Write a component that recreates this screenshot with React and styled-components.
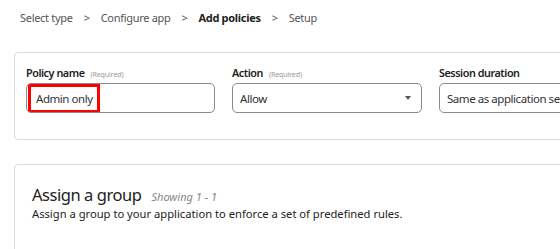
import React from "react";
import styled, { createGlobalStyle } from "styled-components";

const GlobalStyle = createGlobalStyle`
  html, body {
    margin: 0;
    padding: 0;
    background: #ffffff;
    overflow: hidden;
  }
  body {
    font-family: "Noto Sans", "Open Sans", sans-serif;
    color: #222;
  }
`;

const Page = styled.div`
  width: 560px;
  height: 249px;
  overflow: hidden;
  padding: 8px 0 0 14px;
  box-sizing: border-box;
`;

const Steps = styled.nav`
  display: flex;
  align-items: center;
  column-gap: 11px;
  padding-left: 6px;
  height: 18px;
  font-size: 11px;
  letter-spacing: -0.3px;
  color: #555;
`;

const Step = styled.span`
  font-weight: ${(p) => (p.active ? 700 : 400)};
  color: ${(p) => (p.active ? "#222" : "#555")};
`;

const Card = styled.section`
  width: 620px;
  box-sizing: border-box;
  border: 1px solid #dcdcdc;
  border-radius: 4px;
  background: #fff;
  margin-top: ${(p) => p.top}px;
  padding: ${(p) => p.pad};
  min-height: ${(p) => p.minH}px;
`;

const FieldRow = styled.div`
  display: flex;
  column-gap: 17px;
`;

const Field = styled.div`
  display: flex;
  flex-direction: column;
  width: ${(p) => p.w}px;
  flex-shrink: 0;
`;

const Label = styled.label`
  display: flex;
  align-items: baseline;
  column-gap: 6px;
  height: 18px;
  font-size: 10.8px;
  font-weight: 600;
  letter-spacing: -0.45px;
  color: #222;
`;

const Req = styled.span`
  font-size: 7px;
  font-weight: 400;
  letter-spacing: -0.1px;
  color: #999;
`;

const Box = styled.div`
  position: relative;
  display: flex;
  align-items: center;
  height: 30px;
  box-sizing: border-box;
  border: 1px solid #8a8a8a;
  border-radius: 5px;
  padding: 0 10px 0 ${(p) => p.padL || 8}px;
  font-size: 11.5px;
  letter-spacing: -0.45px;
  color: #333;
  white-space: nowrap;
  overflow: hidden;
`;

const Highlight = styled.span`
  position: absolute;
  left: 1px;
  top: 0;
  width: 72px;
  height: 29px;
  box-sizing: border-box;
  border: 3px solid #ff0000;
`;

const Caret = styled.span`
  margin-left: auto;
  width: 0;
  height: 0;
  border-left: 3.5px solid transparent;
  border-right: 3.5px solid transparent;
  border-top: 4px solid #555;
`;

const TitleLine = styled.div`
  display: flex;
  align-items: baseline;
  column-gap: 10px;
`;

const Title = styled.h2`
  margin: 0;
  font-size: 16.5px;
  font-weight: 400;
  letter-spacing: -0.45px;
  color: #222;
`;

const Count = styled.span`
  font-size: 11px;
  font-style: italic;
  color: #888;
`;

const Desc = styled.p`
  margin: 0;
  font-size: 11.2px;
  color: #222;
`;

const steps = ["Select type", "Configure app", "Add policies", "Setup"];

export default function App() {
  return (
    <>
      <GlobalStyle />
      <Page>
        <Steps>
          {steps.map((s, ix) => (
            <React.Fragment key={s}>
              {ix > 0 && <span>&gt;</span>}
              <Step active={s === "Add policies"}>{s}</Step>
            </React.Fragment>
          ))}
        </Steps>

        <Card top={26} pad="12px 0 0 11px" minH={88}>
          <FieldRow>
            <Field w={189}>
              <Label>
                Policy name <Req>(Required)</Req>
              </Label>
              <Box padL={9}>
                <Highlight />
                Admin only
              </Box>
            </Field>
            <Field w={190}>
              <Label>
                Action <Req>(Required)</Req>
              </Label>
              <Box padL={7}>
                Allow
                <Caret />
              </Box>
            </Field>
            <Field w={190}>
              <Label>Session duration</Label>
              <Box padL={7}>Same as application session timeout</Box>
            </Field>
          </FieldRow>
        </Card>

        <Card top={24} pad="18px 0 0 17px" minH={100}>
          <TitleLine>
            <Title>Assign a group</Title>
            <Count>Showing 1 - 1</Count>
          </TitleLine>
          <Desc>Assign a group to your application to enforce a set of predefined rules.</Desc>
        </Card>
      </Page>
    </>
  );
}
